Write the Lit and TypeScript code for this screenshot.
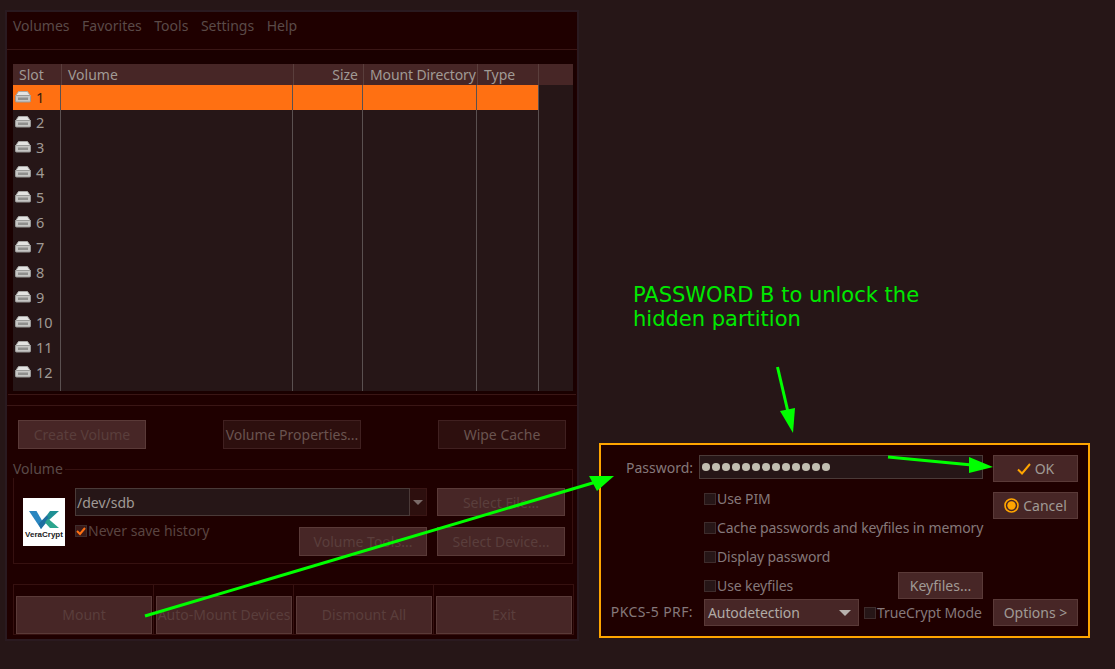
import { LitElement, html, css, svg } from "lit";
import { customElement } from "lit/decorators.js";

const driveIcon = html`<svg class="drive" width="16" height="13" viewBox="0 0 16 13">
  <path d="M3.5 1.5h9L15.5 6H.5z" fill="#e4e4e2" stroke="#a8a8a6" stroke-width="1"/>
  <rect x=".5" y="5.5" width="15" height="6.5" rx="1" fill="#c6c6c4" stroke="#9a9a98"/>
  <rect x="3" y="7.5" width="10" height="2.5" fill="#8f8f8d"/>
</svg>`;

const logo = html`<div class="logo">
  <svg width="42" height="32" viewBox="0 0 42 32">
    <path d="M6 13h7.500L21 26l-3 5z" fill="#2a86c0"/>
    <path d="M18 31l-2.500-5L24 17l4 2z" fill="#1f6fa0"/>
    <path d="M24 17l3-4h9L26 22z" fill="#1f8f94"/>
    <path d="M22 24.500l3-4L36 30h-9z" fill="#2ca58d"/>
  </svg>
  <span class="logo-text">VeraCrypt</span>
</div>`;

const arrows = svg`
  <line x1="145" y1="616" x2="596" y2="482" stroke="#00ff00" stroke-width="3"/>
  <polygon points="614,476 589,476 597,491" fill="#00ff00"/>
  <line x1="888" y1="457" x2="972" y2="465" stroke="#00ff00" stroke-width="3"/>
  <polygon points="993,467 969,457 969,473" fill="#00ff00"/>
  <line x1="777.500" y1="367" x2="788" y2="412" stroke="#00ff00" stroke-width="3"/>
  <polygon points="793,433 780,411 795,408" fill="#00ff00"/>
`;

@customElement("app-root")
export class AppRoot extends LitElement {
  static styles = css`
    :host { display: block; position: relative; width: 1115px; height: 669px; overflow: hidden;
      background: #261617; font-family: "Noto Sans", sans-serif; font-size: 14px; color: #a09a95; }
    * { box-sizing: border-box; }
    .window { position: absolute; left: 5px; top: 10px; width: 574px; height: 631px;
      border: 2px solid #2a1a20; background: #1f0000; display: flex; flex-direction: column; }
    .menu { height: 38px; flex: none; display: flex; gap: 12.5px; padding: 4px 0 0 6px; color: #5a4a48;
      border-bottom: 1px solid #3a1615; line-height: 19px; }
    .notebook { height: 345px; flex: none; background: #1a0000; padding: 14px 4px 3px 5px; margin: 0 1px;
      border-bottom: 1px solid #3a1615; }
    .table { width: 560px; height: 327px; background: #261617; display: flex; flex-direction: column; }
    .thead, .tr { display: grid; flex: none; }
    .thead { grid-template-columns: 48px 232px 70px 114px 61px 35px; height: 21px; background: #472626;
      line-height: 22px; }
    .th { padding: 0 6px; border-left: 1px solid #5a3e3c; white-space: nowrap; }
    .th:first-child { border-left: 0; }
    .th.right { text-align: right; padding-right: 5px; }
    .th.mount { padding-left: 6px; padding-right: 0; letter-spacing: -0.12px; }
    .tr { grid-template-columns: 48px 232px 70px 114px 62px 34px; height: 25px; }
    .tr.tail { height: 6px; }
    .td { border-right: 1px solid #5a5050; }
    .td.c1 { display: flex; align-items: center; padding: 0 0 2px 2px; gap: 5px; font-size: 14.5px; }
    .td.last { border-right: 0; }
    .tr.sel .td:not(.last) { background: #ff7012; }
    .tr.sel .c1 { color: #3a1a0a; }
    .drive { flex: none; }
    .controls { flex: 1; display: flex; flex-direction: column; }
    .gap-line { height: 11px; flex: none; border-bottom: 1px solid #3a1615; background: #1f0000; }
    .btn { display: flex; align-items: center; justify-content: center; white-space: nowrap; overflow: hidden;
      background: #472626; border: 1px solid #5a3a38; color: #5a3e3c; }
    .btn.soft { background: #2d0f0e; border-color: #402020; color: #6a5450; }
    .btn.on { color: #a09a95; gap: 4px; }
    .top-row { display: flex; gap: 77px; padding: 14px 0 0 11px; }
    .top-row .btn { height: 29px; width: 128px; }
    .top-row .btn.wide { width: 138px; }
    .group { position: relative; margin: 20px 0 0 6px; width: 560px; height: 95px; border: 1px solid #361110;
      display: grid; grid-template-columns: 42px 352px 128px; column-gap: 10px;
      grid-template-rows: 28px 29px; row-gap: 9px; padding: 18px 0 0 9px; }
    .legend { position: absolute; left: -1px; top: -11px; background: #1f0000; padding-right: 2px; color: #5a4a48;
      line-height: 19px; height: 19px; }
    .logo { grid-row: 1 / span 2; margin-top: 10px; width: 42px; height: 48px; background: #fff; display: flex;
      flex-direction: column; align-items: center; }
    .logo svg { flex: none; }
    .logo-text { font-family: "Liberation Sans", sans-serif; font-size: 8px; font-weight: 700; color: #222; line-height: 10px; }
    .combo { display: flex; height: 28px; }
    .combo-input { flex: 1; background: #261617; border: 1px solid #4a3a38; padding-left: 1px; line-height: 27px; color: #a09a95; }
    .combo-btn { width: 17px; flex: none; background: #2d0f0e; border: 1px solid #3a1615; border-left: 0; display: flex; align-items: center; justify-content: center; }
    .tri { width: 0; height: 0; border-left: 5px solid transparent; border-right: 5px solid transparent; border-top: 5px solid #7a6a68; }
    .tri.light { border-top-color: #b8b2ae; border-left-width: 6px; border-right-width: 6px; border-top-width: 6px; }
    .second { display: flex; justify-content: space-between; align-items: flex-start; }
    .g-btn { height: 28px; width: 128px; }
    .g-btn.low { height: 29px; margin-top: 2px; }
    .chk-label { display: flex; align-items: center; white-space: nowrap; line-height: 12px; color: #85787a; gap: 1px; letter-spacing: -0.1px; }
    .chk-label.off { color: #5a4440; letter-spacing: 0; }
    .chk-label.low { margin-top: 2px; }
    .box { width: 12px; height: 12px; flex: none; background: #261617; border: 1px solid #3e2c2c; display: flex; align-items: center; justify-content: center; }
    .box.dim { background: #3a1a18; }
    .bottom { margin: 20px 0 0 6px; width: 561px; height: 51px; display: grid; grid-template-columns: repeat(4, 140px);
      border-right: 1px solid #361110; border-bottom: 1px solid #361110; }
    .b-cell { border-left: 1px solid #361110; border-top: 1px solid #361110; padding: 11px 1px 0 2px; }
    .b-cell .btn { height: 38px; width: 136px; padding-bottom: 2px; }
    .annot { position: absolute; left: 633px; top: 283px; font-family: "DejaVu Sans", sans-serif; font-size: 21px;
      line-height: 24px; color: #00e800; white-space: nowrap; }
    .dialog { position: absolute; left: 599px; top: 443px; width: 491px; height: 195px; border: 2px solid #ffa500;
      background: #1f0000; display: flex; gap: 10px; padding: 10px 10px 10px 0; color: #85787a; }
    .d-left { width: 382px; flex: none; display: grid; grid-template-columns: 92px minmax(0, 1fr); column-gap: 6px;
      grid-template-rows: 24px 34px 29px 29px 28px 27px; }
    .d-label { text-align: right; line-height: 26px; white-space: nowrap; }
    .d-label.wide { letter-spacing: 0.4px; }
    .pw { background: #261617; border: 1px solid #4a3a38; display: flex; align-items: center; gap: 2.5px; padding-left: 2px; }
    .dot { width: 7.5px; height: 7.5px; border-radius: 50%; background: #c0bdb0; flex: none; }
    .d-check { grid-column: 2; padding-left: 5px; display: flex; align-items: center; justify-content: space-between; }
    .d-check.first { padding-top: 5px; }
    .d-key { width: 85px; height: 27px; align-self: flex-end; }
    .d-prf { display: flex; align-items: center; padding-left: 5px; gap: 5px; }
    .select { width: 155px; height: 27px; flex: none; background: #472626; border: 1px solid #5a3a38; color: #b0aaa5;
      display: flex; align-items: center; justify-content: space-between; padding: 0 7px 0 3px; letter-spacing: -0.1px; }
    .d-right { width: 85px; flex: none; display: flex; flex-direction: column; }
    .d-btn { height: 27px; width: 85px; flex: none; }
    .d-btn.cancel { margin-top: 10px; }
    .d-btn.options { margin-top: auto; }
    .overlay { position: absolute; left: 0; top: 0; pointer-events: none; }
  `;

  render() {
    const rows = Array.from({ length: 12 }, (_, i) => i + 1);
    return html`
      <div class="window">
        <div class="menu"><span>Volumes</span><span>Favorites</span><span>Tools</span><span>Settings</span><span>Help</span></div>
        <div class="notebook">
          <div class="table">
            <div class="thead">
              <div class="th">Slot</div>
              <div class="th">Volume</div>
              <div class="th right">Size</div>
              <div class="th mount">Mount Directory</div>
              <div class="th">Type</div>
              <div class="th"></div>
            </div>
            ${rows.map(n => html`
              <div class="tr ${n === 1 ? "sel" : ""}">
                <div class="td c1">${driveIcon}<span>${n}</span></div>
                <div class="td"></div><div class="td"></div><div class="td"></div><div class="td"></div>
                <div class="td last"></div>
              </div>`)}
            <div class="tr tail">
              <div class="td"></div><div class="td"></div><div class="td"></div><div class="td"></div><div class="td"></div>
              <div class="td last"></div>
            </div>
          </div>
        </div>
        <div class="controls">
          <div class="gap-line"></div>
          <div class="top-row">
            <div class="btn">Create Volume</div>
            <div class="btn soft wide">Volume Properties...</div>
            <div class="btn soft">Wipe Cache</div>
          </div>
          <div class="group">
            <div class="legend">Volume</div>
            ${logo}
            <div class="combo">
              <div class="combo-input">/dev/sdb</div>
              <div class="combo-btn"><span class="tri"></span></div>
            </div>
            <div class="btn g-btn">Select File...</div>
            <div class="second">
              <div class="chk-label off">
                <span class="box dim"><svg width="10" height="10" viewBox="0 0 10 10"><path d="M1 5l3 3 5-6" fill="none" stroke="#ff7012" stroke-width="2"/></svg></span>
                Never save history
              </div>
              <div class="btn g-btn low">Volume Tools...</div>
            </div>
            <div class="btn g-btn low">Select Device...</div>
          </div>
          <div class="bottom">
            <div class="b-cell"><div class="btn">Mount</div></div>
            <div class="b-cell"><div class="btn">Auto-Mount Devices</div></div>
            <div class="b-cell"><div class="btn">Dismount All</div></div>
            <div class="b-cell"><div class="btn">Exit</div></div>
          </div>
        </div>
      </div>

      <div class="annot">PASSWORD B to unlock the<br />hidden partition</div>

      <div class="dialog">
        <div class="d-left">
          <div class="d-label">Password:</div>
          <div class="pw">${Array.from({ length: 13 }, () => html`<span class="dot"></span>`)}</div>
          <div class="d-check first"><label class="chk-label"><span class="box"></span>Use PIM</label></div>
          <div class="d-check"><label class="chk-label"><span class="box"></span>Cache passwords and keyfiles in memory</label></div>
          <div class="d-check"><label class="chk-label"><span class="box"></span>Display password</label></div>
          <div class="d-check"><label class="chk-label low"><span class="box"></span>Use keyfiles</label><div class="btn on d-key">Keyfiles...</div></div>
          <div class="d-label wide">PKCS-5 PRF:</div>
          <div class="d-prf">
            <div class="select"><span>Autodetection</span><span class="tri light"></span></div>
            <label class="chk-label"><span class="box"></span>TrueCrypt Mode</label>
          </div>
        </div>
        <div class="d-right">
          <div class="btn on d-btn">
            <svg width="14" height="12" viewBox="0 0 14 12"><path d="M1 6.500l4 4L13 1" fill="none" stroke="#ffa500" stroke-width="2"/></svg>
            OK
          </div>
          <div class="btn on d-btn cancel">
            <svg width="15" height="15" viewBox="0 0 15 15"><circle cx="7.500" cy="7.500" r="6.500" fill="none" stroke="#ffa500" stroke-width="1.600"/><circle cx="7.500" cy="7.500" r="4.200" fill="#ffa500"/></svg>
            Cancel
          </div>
          <div class="btn on d-btn options">Options &gt;</div>
        </div>
      </div>

      <svg class="overlay" width="1115" height="669" viewBox="0 0 1115 669">${arrows}</svg>
    `;
  }
}
